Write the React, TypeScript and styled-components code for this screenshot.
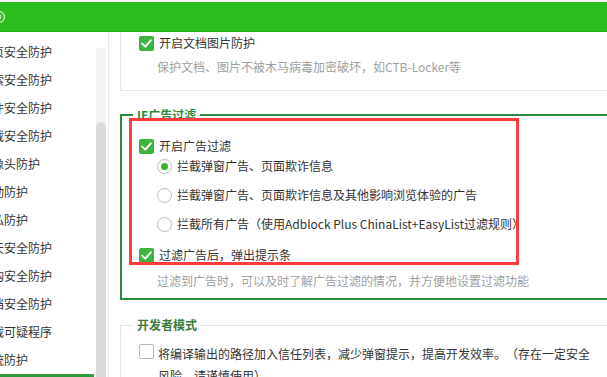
import styled, { createGlobalStyle } from "styled-components"

const GlobalStyle = createGlobalStyle`
    html, body {
        margin: 0;
        padding: 0;
        background: #ffffff;
    }
    body {
        font-family: "Noto Sans CJK SC", "Noto Sans", sans-serif;
        font-size: 12px;
        color: #333333;
        text-spacing-trim: space-all;
    }
`

type Tone = "accent" | "plain"

const sideItems = [
    "网页安全防护",
    "搜索安全防护",
    "邮件安全防护",
    "下载安全防护",
    "摄像头防护",
    "驱动防护",
    "隐私防护",
    "聊天安全防护",
    "网购安全防护",
    "文档安全防护",
    "拦截可疑程序",
    "系统防护",
]

const adOptions = [
    { label: "拦截弹窗广告、页面欺诈信息", checked: true },
    { label: "拦截弹窗广告、页面欺诈信息及其他影响浏览体验的广告", checked: false },
    { label: "拦截所有广告（使用Adblock Plus ChinaList+EasyList过滤规则）", checked: false },
]

const CheckBox = (props: { checked: boolean }) => (
    <Box $checked={props.checked}>
        {props.checked && (
            <svg width="15" height="15" viewBox="0 0 15 15">
                <path d="M3.2 7.6 L6.3 10.6 L11.8 4.4" fill="none" stroke="#ffffff" strokeWidth="2" strokeLinecap="round" strokeLinejoin="round" />
            </svg>
        )}
    </Box>
)

export default function App() {
    return (
        <>
            <GlobalStyle />
            <Window>
                <Header>
                    <HeaderIcon width="16" height="16" viewBox="0 0 16 16">
                        <circle cx="8" cy="8" r="5.5" fill="none" stroke="#e8f7e4" strokeWidth="1.3" />
                        <circle cx="8" cy="8" r="2" fill="none" stroke="#e8f7e4" strokeWidth="1.1" />
                    </HeaderIcon>
                </Header>
                <Body>
                    <Sidebar>
                        <SideList>
                            {sideItems.map((item) => (
                                <SideItem key={item}><SideLabel>{item}</SideLabel></SideItem>
                            ))}
                            <SideItem $active><SideLabel>木马防火墙</SideLabel></SideItem>
                        </SideList>
                        <ScrollTrack><ScrollThumb /></ScrollTrack>
                    </Sidebar>

                    <Content>
                        <TopPanel>
                            <Row>
                                <CheckBox checked />
                                <span>开启文档图片防护</span>
                            </Row>
                            <Hint $top={8}>保护文档、图片不被木马病毒加密破坏，如CTB-Locker等</Hint>
                        </TopPanel>

                        <Group $tone="accent">
                            <Legend $tone="accent">IE广告过滤</Legend>
                            <Row>
                                <CheckBox checked />
                                <span>开启广告过滤</span>
                            </Row>
                            <RadioList>
                                {adOptions.map((opt) => (
                                    <Row key={opt.label} $indent>
                                        <Radio>{opt.checked && <RadioDot />}</Radio>
                                        <span>{opt.label}</span>
                                    </Row>
                                ))}
                            </RadioList>
                            <Row $top={15}>
                                <CheckBox checked />
                                <span>过滤广告后，弹出提示条</span>
                            </Row>
                            <Hint $top={10}>过滤到广告时，可以及时了解广告过滤的情况，并方便地设置过滤功能</Hint>
                        </Group>

                        <Group $tone="plain">
                            <Legend $tone="plain">开发者模式</Legend>
                            <WrapRow>
                                <CheckBox checked={false} />
                                <WrapText>将编译输出的路径加入信任列表，减少弹窗提示，提高开发效率。（存在一定安全风险，请谨慎使用）</WrapText>
                            </WrapRow>
                        </Group>

                        <Highlight />
                    </Content>
                </Body>
            </Window>
        </>
    )
}

const Window = styled.div`
    display: flex;
    flex-direction: column;
    width: 607px;
    height: 377px;
    overflow: hidden;
    background: #ffffff;
`

const Header = styled.div`
    display: flex;
    align-items: center;
    flex-shrink: 0;
    height: 29px;
    margin-top: 2px;
    background: #2ebd1e;
    border-bottom: 1px solid #2aab1c;
`

const HeaderIcon = styled.svg`
    margin-left: -9px;
    opacity: 0.85;
`

const Body = styled.div`
    display: flex;
    flex: 1;
    min-height: 0;
`

const Sidebar = styled.div`
    display: flex;
    flex-shrink: 0;
    width: 108px;
    border-right: 1px solid #e6e6e6;
`

const SideList = styled.div`
    display: flex;
    flex-direction: column;
    width: 94px;
    padding-top: 6px;
    overflow: hidden;
`

const SideItem = styled.div<{ $active?: boolean }>`
    display: flex;
    align-items: center;
    flex-shrink: 0;
    height: 28px;
    white-space: nowrap;
    line-height: 16px;
    background: ${(p) => (p.$active ? "#2e9a3c" : "transparent")};
    color: ${(p) => (p.$active ? "#ffffff" : "#333333")};
`

const SideLabel = styled.span`
    margin-left: -20px;
`

const ScrollTrack = styled.div`
    display: flex;
    flex-direction: column;
    width: 10px;
    margin-left: 2px;
    margin-top: 16px;
    padding-top: 74px;
    background: #f3f3f3;
`

const ScrollThumb = styled.div`
    flex: 1;
    background: #dadada;
    border-radius: 5px 5px 0 0;
`

const Content = styled.div`
    position: relative;
    display: flex;
    flex-direction: column;
    flex: 1;
    min-width: 0;
    padding-left: 11px;
    overflow: hidden;
`

const TopPanel = styled.div`
    display: flex;
    flex-direction: column;
    flex-shrink: 0;
    width: 540px;
    padding: 3px 0 15px 18px;
    border: 1px solid #e6e6e6;
    border-top: none;
`

const Group = styled.fieldset<{ $tone: Tone }>`
    display: flex;
    flex-direction: column;
    flex-shrink: 0;
    width: 540px;
    min-inline-size: 0;
    margin: ${(p) => (p.$tone === "accent" ? "16px 0 0 0" : "17px 0 0 0")};
    padding: ${(p) => (p.$tone === "accent" ? "15px 0 9px 17px" : "11px 0 20px 18px")};
    border: ${(p) => (p.$tone === "accent" ? "2px solid #2e8b3e" : "1px solid #e3e3e3")};
`

const Legend = styled.legend<{ $tone: Tone }>`
    margin-left: -6px;
    padding: 0 4px;
    line-height: 16px;
    font-size: 12px;
    font-weight: bold;
    color: ${(p) => (p.$tone === "accent" ? "#2e8b3e" : "#3a7a3a")};
`

const Row = styled.div<{ $indent?: boolean; $top?: number }>`
    display: flex;
    align-items: center;
    gap: 5px;
    height: 16px;
    line-height: 16px;
    white-space: nowrap;
    margin-left: ${(p) => (p.$indent ? "18px" : "0")};
    margin-top: ${(p) => p.$top ?? 0}px;
`

const RadioList = styled.div`
    display: flex;
    flex-direction: column;
    gap: 13px;
    margin-top: 4px;
`

const Hint = styled.div<{ $top: number }>`
    margin-top: ${(p) => p.$top}px;
    margin-left: 18px;
    line-height: 16px;
    white-space: nowrap;
    color: #a0a0a0;
`

const Box = styled.span<{ $checked: boolean }>`
    display: flex;
    align-items: center;
    justify-content: center;
    flex-shrink: 0;
    box-sizing: border-box;
    width: 15px;
    height: 15px;
    border-radius: 2px;
    background: ${(p) => (p.$checked ? "#3db440" : "#ffffff")};
    border: ${(p) => (p.$checked ? "none" : "1px solid #b9b9b9")};
`

const Radio = styled.span`
    display: flex;
    align-items: center;
    justify-content: center;
    flex-shrink: 0;
    box-sizing: border-box;
    width: 15px;
    height: 15px;
    border-radius: 50%;
    border: 1px solid #bcbcbc;
    background: #ffffff;
`

const RadioDot = styled.span`
    width: 7px;
    height: 7px;
    border-radius: 50%;
    background: #35b22e;
`

const WrapRow = styled.div`
    display: flex;
    align-items: flex-start;
    gap: 4px;
`

const WrapText = styled.div`
    max-width: 440px;
    line-height: 22px;
    margin-top: -1px;
`

const Highlight = styled.div`
    position: absolute;
    left: 20px;
    top: 86px;
    box-sizing: border-box;
    width: 390px;
    height: 147px;
    border: 3px solid #ff3b3b;
    pointer-events: none;
`
